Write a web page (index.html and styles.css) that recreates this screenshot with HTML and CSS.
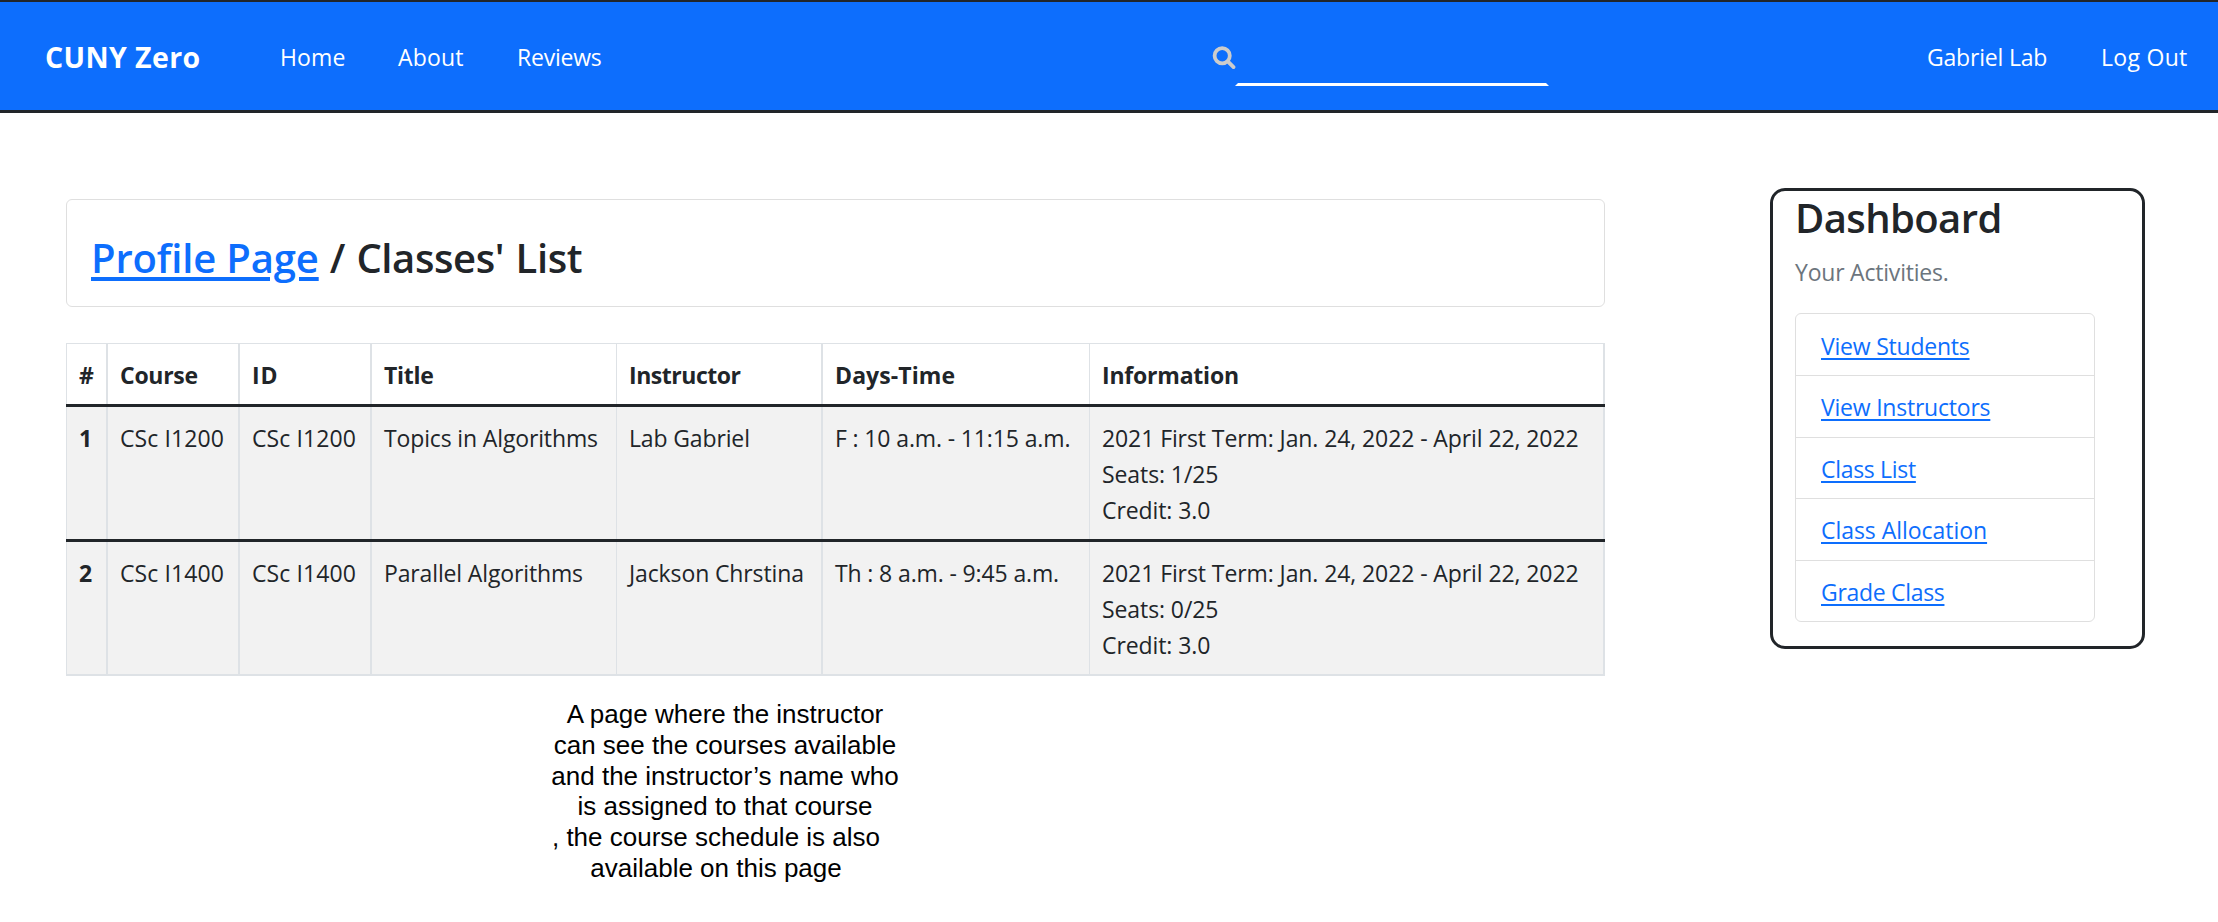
FILE: index.html
```
<!DOCTYPE html>
<html lang="en">
<head>
<meta charset="utf-8">
<title>CUNY Zero</title>
<link rel="stylesheet" href="styles.css">
</head>
<body>
<header class="navbar">
  <a class="brand">CUNY Zero</a>
  <nav class="links"><a class="home">Home</a><a class="about">About</a><a class="reviews">Reviews</a></nav>
  <div class="search">
    <svg class="search-icon" viewBox="0 0 24 24"><circle cx="10.2" cy="9.8" r="7.6"/><path d="M15.8 15.4l5.7 5.7"/></svg>
    <input class="search-input" type="text" aria-label="Search">
  </div>
  <nav class="account"><a class="user">Gabriel Lab</a><a class="logout">Log Out</a></nav>
</header>
<main class="page">
  <div class="content">
    <h3 class="crumb"><a class="link">Profile Page</a><span class="here">/ Classes' List</span></h3>
    <table class="classes">
      <colgroup><col class="c1"><col class="c2"><col class="c3"><col class="c4"><col class="c5"><col class="c6"><col class="c7"></colgroup>
      <thead><tr><th>#</th><th class="w2 t-course">Course</th><th class="w2 t-id">ID</th><th class="w2 t-title">Title</th><th class="t-instructor">Instructor</th><th class="w2 t-days">Days-Time</th><th class="last t-info">Information</th></tr></thead>
      <tbody>
        <tr><th>1</th><td class="w2 code">CSc I1200</td><td class="w2 code">CSc I1200</td><td class="w2 name">Topics in Algorithms</td><td class="name">Lab Gabriel</td><td class="w2 time">F : 10 a.m. - 11:15 a.m.</td><td class="last info">2021 First Term: Jan. 24, 2022 - April 22, 2022<br>Seats: 1/25<br>Credit: 3.0</td></tr>
        <tr class="end"><th>2</th><td class="w2 code">CSc I1400</td><td class="w2 code">CSc I1400</td><td class="w2 name">Parallel Algorithms</td><td class="name long">Jackson Chrstina</td><td class="w2 time">Th : 8 a.m. - 9:45 a.m.</td><td class="last info">2021 First Term: Jan. 24, 2022 - April 22, 2022<br>Seats: 0/25<br>Credit: 3.0</td></tr>
      </tbody>
    </table>
    <div class="note">
      <p>A page where the instructor</p>
      <p>can see the courses available</p>
      <p>and the instructor’s name who</p>
      <p>is assigned to that course</p>
      <p class="shift">, the course schedule is also</p>
      <p class="shift">available on this page</p>
    </div>
  </div>
  <aside class="dashboard">
    <h3 class="dash-title">Dashboard</h3>
    <p class="muted">Your Activities.</p>
    <ul class="menu">
      <li><a class="link">View Students</a></li>
      <li><a class="link">View Instructors</a></li>
      <li><a class="link tight">Class List</a></li>
      <li><a class="link loose">Class Allocation</a></li>
      <li><a class="link tight">Grade Class</a></li>
    </ul>
  </aside>
</main>
</body>
</html>
```
FILE: styles.css
```
* { box-sizing: border-box; }
body { margin: 0; background: #fff; color: #212529; font: 23px/36px "Open Sans", "Noto Sans", sans-serif; }
h3, p, ul { margin: 0; padding: 0; font-weight: inherit; }
.navbar { display: flex; align-items: flex-start; height: 113px; padding: 37px 0 0 45px; background: #0d6efd; border-top: 2px solid #212529; border-bottom: 3px solid #212529; color: #fff; white-space: nowrap; overflow: hidden; }
.brand { flex: none; width: 235px; font-size: 28.5px; font-weight: 700; letter-spacing: 0.4px; }
.links { display: flex; flex: none; width: 932px; }
.links a { flex: none; width: 118px; }
.links .about { width: 119px; }
.home { letter-spacing: 0.1px; }
.about { letter-spacing: 0.19px; }
.reviews { letter-spacing: -0.22px; }
.search { display: flex; flex: none; width: 715px; }
.search-icon { width: 24px; height: 24px; margin: 7px -1px 0 0; fill: none; stroke: #ccc; stroke-width: 3.8; stroke-linecap: round; }
.search-input { width: 314px; height: 47px; padding: 0; background: transparent; border: 3px solid transparent; border-bottom-color: #fff; outline: 0; color: #fff; }
.account { display: flex; flex: none; }
.user { width: 174px; letter-spacing: -0.2px; }
.logout { letter-spacing: 0.3px; }
.page { display: flex; align-items: flex-start; padding-left: 66px; }
.content { width: 1539px; padding-top: 86px; }
.link { color: #0d6efd; text-decoration: underline; text-decoration-thickness: 2px; text-underline-offset: 3px; text-decoration-skip-ink: auto; }
.crumb { display: flex; gap: 11px; height: 108px; padding: 33px 0 0 24px; border: 1px solid #dfdfdf; border-radius: 6px; font-size: 40px; line-height: 50px; font-weight: 600; white-space: nowrap; }
.crumb .link { letter-spacing: -0.15px; text-decoration-thickness: 4px; text-underline-offset: 4px; }
.here { letter-spacing: -0.4px; word-spacing: 1.5px; }
.classes { width: 1539px; margin-top: 36px; table-layout: fixed; border-spacing: 0; white-space: nowrap; }
.c1 { width: 40px; }
.c2, .c3 { width: 132px; }
.c4 { width: 246px; }
.c5 { width: 205px; }
.c6 { width: 268px; }
.c7 { width: 516px; }
.classes th, .classes td { padding: 0 0 0 13px; text-align: left; vertical-align: top; }
.classes .w2 { padding-left: 14px; }
.classes thead th { height: 61px; padding-top: 14px; box-shadow: inset 1px 1px #dee2e6; }
.classes thead .w2 { box-shadow: inset 2px 0 #dee2e6, inset 0 1px #dee2e6; }
.classes thead .last { box-shadow: inset 1px 1px #dee2e6, inset -2px 0 #dee2e6; }
.classes tbody th, .classes tbody td { height: 135px; padding-top: 16px; background: #f2f2f2; box-shadow: inset 0 3px #212529, inset 1px 0 #dee2e6; }
.classes tbody .w2 { box-shadow: inset 0 3px #212529, inset 2px 0 #dee2e6; }
.classes tbody .last { box-shadow: inset 0 3px #212529, inset 1px 0 #dee2e6, inset -2px 0 #dee2e6; }
.classes .end th, .classes .end td { height: 137px; border-bottom: 2px solid #dee2e6; }
.t-course, .t-title { letter-spacing: -0.28px; }
.t-id { letter-spacing: 1px; }
.t-instructor { letter-spacing: -0.46px; }
.t-days { letter-spacing: 0.1px; }
.t-info { letter-spacing: -0.21px; }
.code { letter-spacing: 0.1px; }
.name { letter-spacing: -0.14px; }
.long { letter-spacing: -0.12px; }
.time { letter-spacing: -0.13px; }
.info { letter-spacing: -0.09px; }
.note { width: 400px; margin: 23px 0 0 459px; color: #000; font: 26px/30.8px "Liberation Sans", Arial, sans-serif; text-align: center; white-space: nowrap; }
.shift { padding-right: 18px; }
.dashboard { width: 375px; height: 461px; margin: 75px 0 0 165px; padding: 2px 0 0 22px; border: 3px solid #212529; border-radius: 15px; }
.dash-title { font-size: 40px; line-height: 50px; font-weight: 600; letter-spacing: -0.6px; }
.muted { margin-top: 11px; color: #6c757d; letter-spacing: -0.21px; }
.menu { width: 300px; margin-top: 23px; list-style: none; border: 1px solid #dfdfdf; border-radius: 6px; letter-spacing: -0.22px; }
.menu li { height: 61.5px; padding: 13px 0 0 25px; }
.menu li:first-child { height: 61px; padding-top: 14px; }
.menu li + li { border-top: 1px solid #dfdfdf; }
.tight { letter-spacing: -0.31px; }
.loose { letter-spacing: -0.04px; }
```
